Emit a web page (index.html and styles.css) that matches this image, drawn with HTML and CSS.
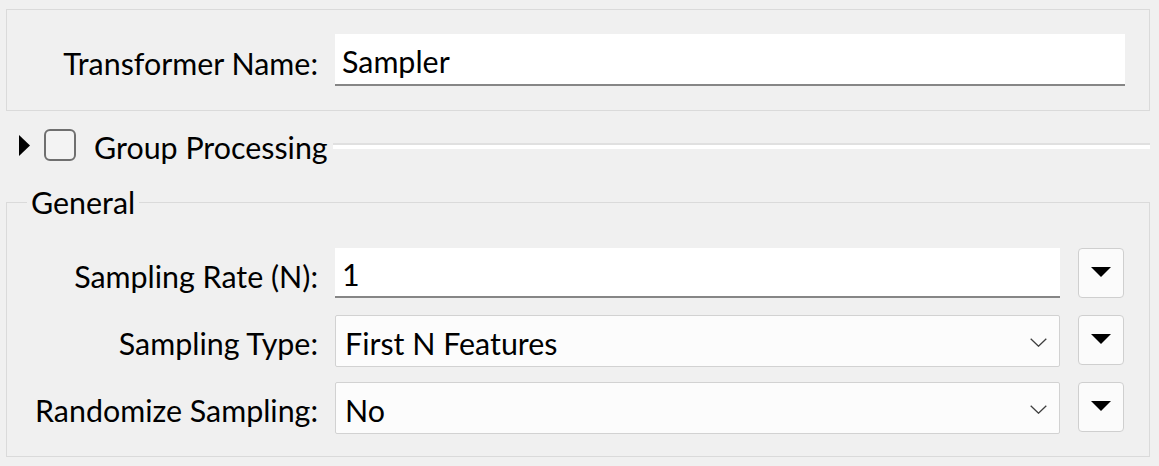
FILE: index.html
```
<!DOCTYPE html>
<html>
<head>
<meta charset="utf-8">
<link rel="stylesheet" href="styles.css">
</head>
<body>
<div class="panel">
  <div class="name-box">
    <label class="lbl">Transformer Name:</label>
    <div class="field text-field">Sampler</div>
  </div>

  <div class="group-row">
    <svg class="expander" width="11" height="21" viewBox="0 0 11 21"><path d="M0 0 L11 10.5 L0 21 Z" fill="#000"/></svg>
    <span class="checkbox"></span>
    <span class="group-title">Group Processing</span>
    <span class="group-line"></span>
  </div>

  <fieldset class="general">
    <legend>General</legend>
    <div class="rows">
      <label class="lbl">Sampling Rate (N):</label>
      <div class="field text-field">1</div>
      <button class="menu-btn"><svg width="20" height="10" viewBox="0 0 20 10"><path d="M0 0 H20 L10 10 Z" fill="#000"/></svg></button>

      <label class="lbl">Sampling Type:</label>
      <div class="field combo"><span>First N Features</span><svg class="chev" width="17" height="9" viewBox="0 0 17 9"><path d="M0.7 0.7 L8.5 8.2 L16.3 0.7" fill="none" stroke="#3f3f3f" stroke-width="1.3"/></svg></div>
      <button class="menu-btn"><svg width="20" height="10" viewBox="0 0 20 10"><path d="M0 0 H20 L10 10 Z" fill="#000"/></svg></button>

      <label class="lbl">Randomize Sampling:</label>
      <div class="field combo"><span>No</span><svg class="chev" width="17" height="9" viewBox="0 0 17 9"><path d="M0.7 0.7 L8.5 8.2 L16.3 0.7" fill="none" stroke="#3f3f3f" stroke-width="1.3"/></svg></div>
      <button class="menu-btn"><svg width="20" height="10" viewBox="0 0 20 10"><path d="M0 0 H20 L10 10 Z" fill="#000"/></svg></button>
    </div>
  </fieldset>
</div>
</body>
</html>
```

FILE: styles.css
```
* { box-sizing: border-box; }
html, body {
  margin: 0;
  padding: 0;
  background: #f0f0f0;
}
body {
  font-family: Lato, "Noto Sans", sans-serif;
  font-size: 30.4px;
  color: #000;
  width: 1159px;
  height: 466px;
  overflow: hidden;
}
.panel {
  padding: 9px 9px 0 6px;
}
.name-box {
  border: 1px solid #dadada;
  height: 102px;
  display: grid;
  grid-template-columns: 311px 790px;
  column-gap: 17px;
  align-content: start;
  padding-top: 24px;
}
.lbl {
  text-align: right;
  align-self: center;
  white-space: nowrap;
  padding-top: 5px;
}
.field {
  height: 52px;
  display: flex;
  align-items: center;
  white-space: nowrap;
}
.field > span, .text-field { padding-top: 4px; }
.text-field {
  background: #fff;
  border-bottom: 2px solid #868686;
  padding-left: 7px;
}
.general .text-field { height: 50px; }
.combo {
  background: #fcfcfc;
  border: 1px solid #d2d2d2;
  border-radius: 2px;
  padding: 0 12px 0 9px;
  justify-content: space-between;
}
.chev { flex: none; margin-top: 2px; }
.group-row {
  display: flex;
  align-items: center;
  height: 32px;
  margin-top: 18px;
  padding-left: 13px;
}
.expander { flex: none; }
.checkbox {
  flex: none;
  width: 32px;
  height: 32px;
  margin-left: 14px;
  border: 2px solid #6f6f6f;
  border-radius: 6px;
  background: #f3f3f3;
}
.group-title {
  margin-left: 18px;
  white-space: nowrap;
  padding-top: 3px;
}
.group-line {
  flex: 1;
  height: 6px;
  margin-left: 5px;
  margin-top: 1px;
  border-top: 2px solid #e0e0e0;
  background: #fff;
}
.general {
  margin: 23px 0 0 0;
  border: 1px solid #dadada;
  padding: 28px 0 0 0;
  height: 273px;
}
.general legend {
  margin-left: 20px;
  padding: 0 4px;
  line-height: 36px;
}
.rows {
  display: grid;
  grid-template-columns: 311px 725px 46px;
  column-gap: 17px;
  row-gap: 16px;
  grid-auto-rows: 51px;
}
.rows .menu-btn { margin-left: 1px; }
.menu-btn {
  width: 46px;
  height: 50px;
  background: #fbfbfb;
  border: 1px solid #cfcfcf;
  border-radius: 4px;
  padding: 0;
  display: flex;
  align-items: center;
  justify-content: center;
  padding-bottom: 2px;
}
```
